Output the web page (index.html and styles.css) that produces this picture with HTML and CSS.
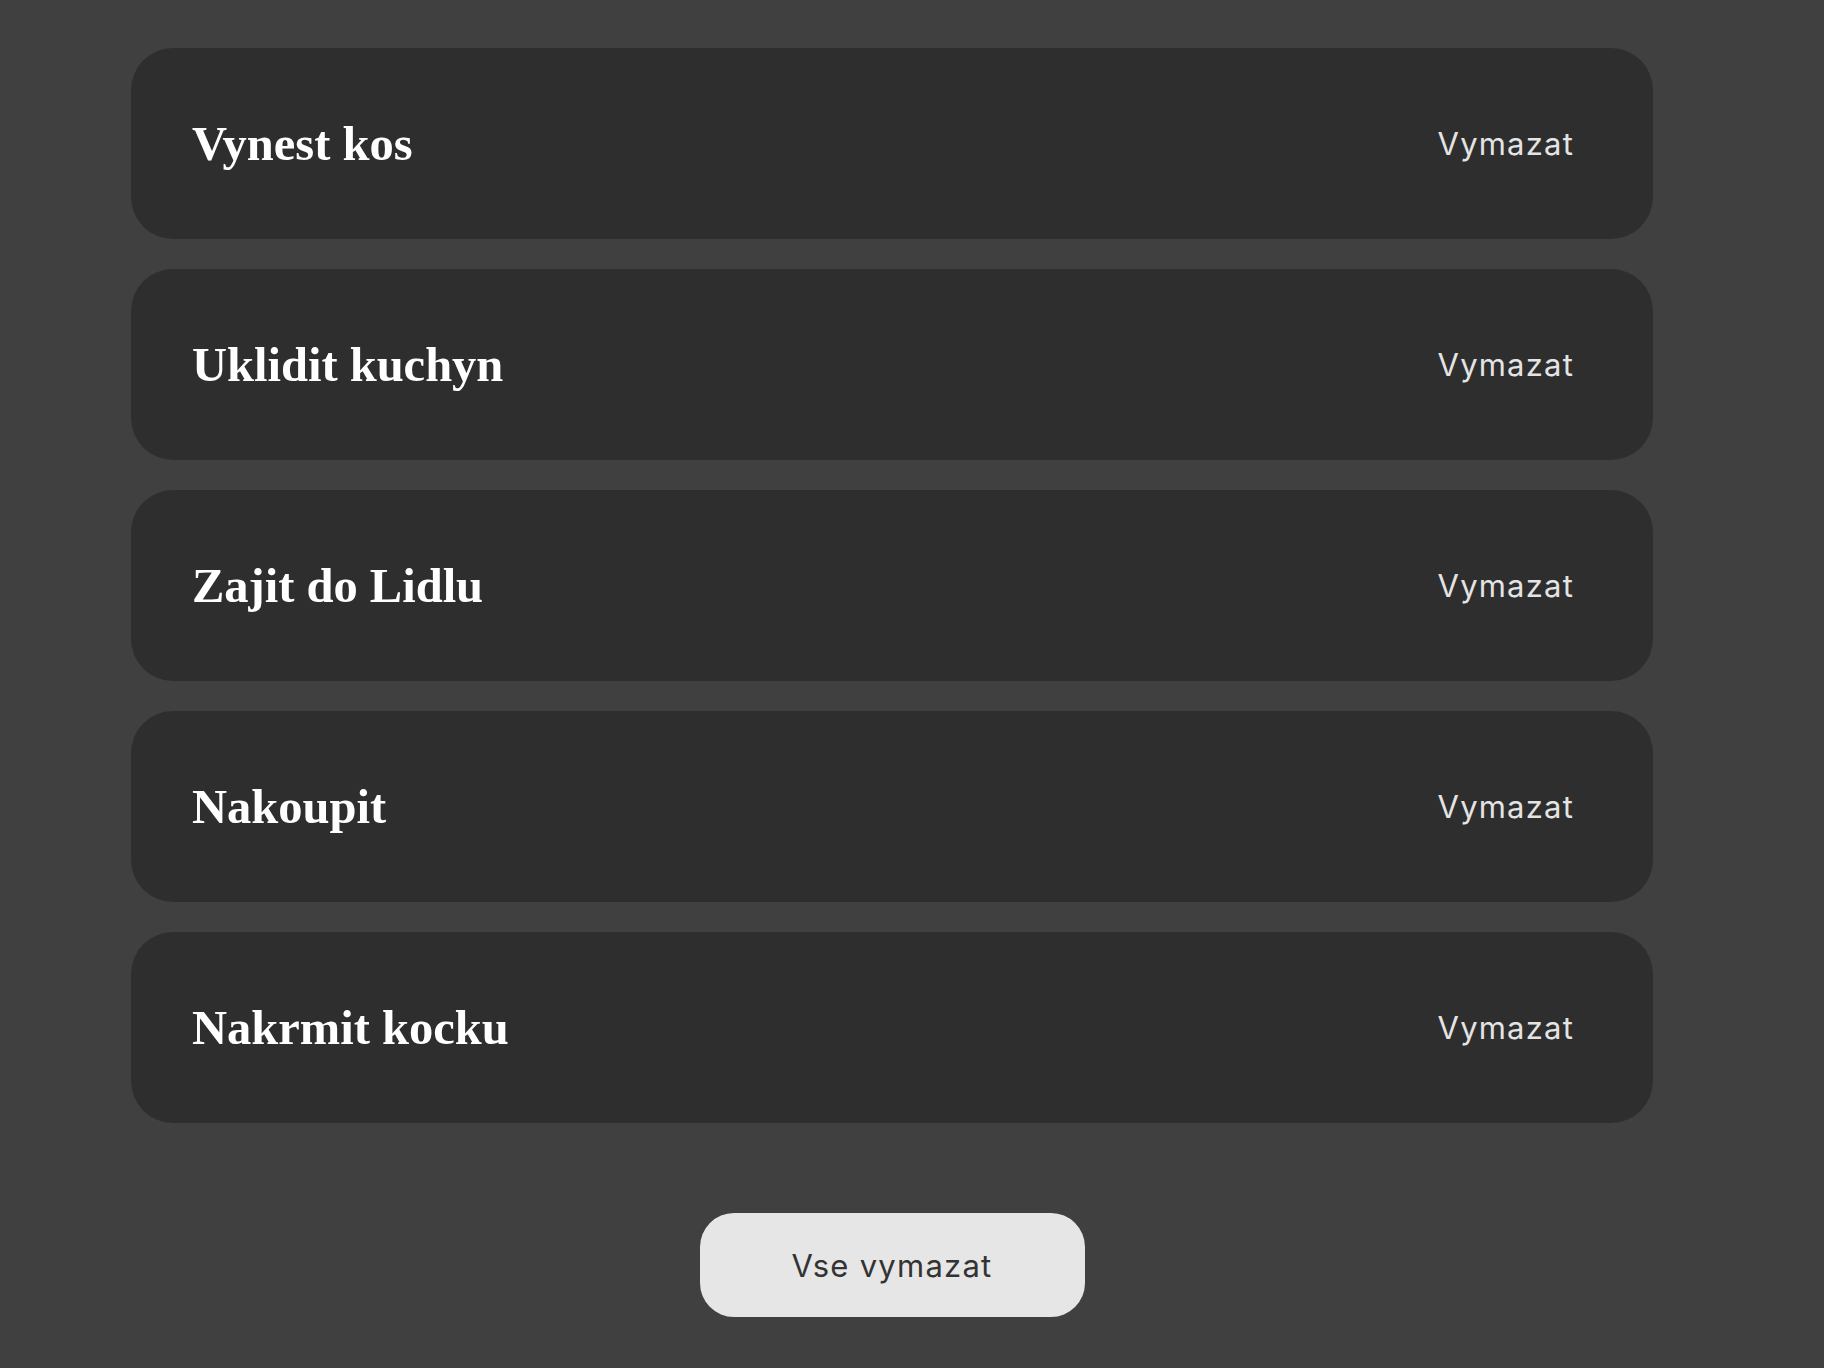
FILE: index.html
```html
<!DOCTYPE html>
<html>
<head>
<meta charset="utf-8">
<link rel="stylesheet" href="styles.css">
</head>
<body>
<div class="wrap">
  <ul class="list">
    <li class="item"><h2 class="title">Vynest kos</h2><button class="del">Vymazat</button></li>
    <li class="item"><h2 class="title">Uklidit kuchyn</h2><button class="del">Vymazat</button></li>
    <li class="item"><h2 class="title">Zajit do Lidlu</h2><button class="del">Vymazat</button></li>
    <li class="item"><h2 class="title">Nakoupit</h2><button class="del">Vymazat</button></li>
    <li class="item"><h2 class="title">Nakrmit kocku</h2><button class="del">Vymazat</button></li>
  </ul>
  <div class="footer"><button class="clear">Vse vymazat</button></div>
</div>
</body>
</html>
```
FILE: styles.css
```css
html, body {
  margin: 0;
  padding: 0;
  background: #404040;
}
body {
  width: 1824px;
  height: 1368px;
  overflow: hidden;
}
.wrap {
  width: 1522px;
  margin-left: 131px;
  padding-top: 48px;
}
.list {
  list-style: none;
  margin: 0;
  padding: 0;
  display: flex;
  flex-direction: column;
  gap: 30px;
}
.item {
  height: 191px;
  box-sizing: border-box;
  background: #2e2e2e;
  border-radius: 42px;
  display: flex;
  align-items: center;
  justify-content: space-between;
  padding: 0 79px 0 61px;
}
.title {
  margin: 0;
  font-family: "Liberation Serif", serif;
  font-weight: bold;
  font-size: 48.5px;
  color: #ffffff;
}
.del {
  background: none;
  border: none;
  padding: 0;
  font-family: Inter, sans-serif;
  font-size: 31px;
  color: #e4e4e4;
  letter-spacing: 1.2px;
}
.footer {
  display: flex;
  justify-content: center;
  padding-top: 90px;
}
.clear {
  width: 385px;
  height: 104px;
  background: #e6e6e6;
  border: none;
  border-radius: 34px;
  font-family: Inter, sans-serif;
  font-size: 31px;
  color: #333333;
  letter-spacing: 1.25px;
}
```
